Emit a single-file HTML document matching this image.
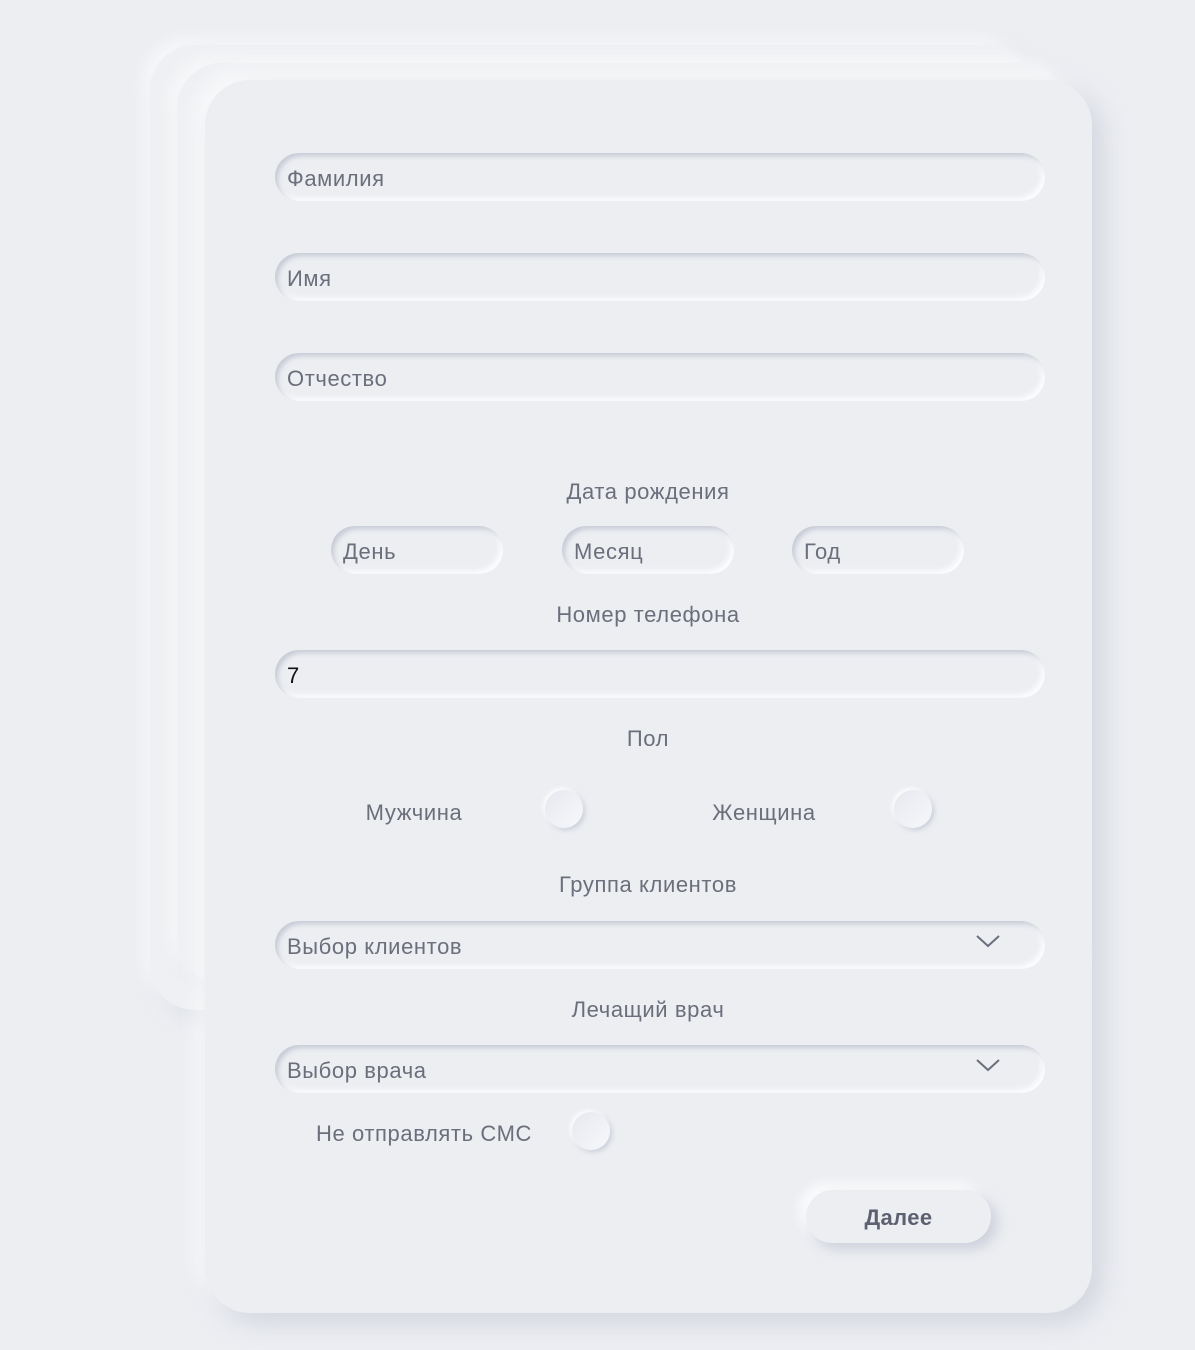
<!DOCTYPE html>
<html><head><meta charset="utf-8"><style>
*{box-sizing:border-box;margin:0;padding:0}
body{width:1195px;height:1350px;background:#eceef2;font-family:"Liberation Sans",sans-serif;position:relative;overflow:hidden;color:#6b6f7b}
.card{position:absolute;border-radius:45px}
.b1{left:150px;top:45px;width:880px;height:965px;background:#eff0f3;box-shadow:8px 8px 20px rgba(190,194,208,.35),-6px -6px 16px rgba(255,255,255,.7)}
.b2{left:177px;top:63px;width:890px;height:920px;background:#eef0f3;box-shadow:8px 8px 20px rgba(190,194,208,.35),-6px -6px 16px rgba(255,255,255,.7)}
.f{left:205px;top:80px;width:887px;height:1233px;background:#eceef2;box-shadow:10px 10px 25px rgba(180,184,200,.45),-8px -8px 20px rgba(255,255,255,.8)}
.in{position:absolute;height:48px;border-radius:24px;background:#eceef2;box-shadow:inset 3px 3px 5px rgba(170,174,192,.55),inset -3px -3px 6px rgba(255,255,255,.95);font-size:22px;letter-spacing:.6px;line-height:52px;padding-left:12px;color:#6b6f7b}
.lbl{position:absolute;font-size:22px;letter-spacing:.6px;transform:translateX(-50%);white-space:nowrap;margin-top:2px}
.rad{position:absolute;width:38px;height:38px;border-radius:50%;background:linear-gradient(135deg,#e6e8ee,#f7f8fb);box-shadow:-2px -2px 4px rgba(255,255,255,.9),2px 2px 5px rgba(170,174,192,.5)}
.chev{position:absolute;right:44px;top:12px}
.btn{position:absolute;left:806px;top:1190px;width:185px;height:53px;border-radius:27px;background:#eceef2;box-shadow:6px 6px 12px rgba(175,180,198,.5),-6px -6px 12px rgba(255,255,255,.9);font-weight:bold;font-size:22px;letter-spacing:.4px;text-align:center;line-height:55px;color:#5c6070}
</style></head><body>
<div class="card b1"></div><div class="card b2"></div><div class="card f"></div>
<div class="in" style="left:275px;top:153px;width:770px">Фамилия</div>
<div class="in" style="left:275px;top:253px;width:770px">Имя</div>
<div class="in" style="left:275px;top:353px;width:770px">Отчество</div>
<div class="lbl" style="left:648px;top:477px">Дата рождения</div>
<div class="in" style="left:331px;top:526px;width:172px">День</div>
<div class="in" style="left:562px;top:526px;width:172px">Месяц</div>
<div class="in" style="left:792px;top:526px;width:172px">Год</div>
<div class="lbl" style="left:648px;top:600px">Номер телефона</div>
<div class="in" style="left:275px;top:650px;width:770px;color:#111">7</div>
<div class="lbl" style="left:648px;top:724px">Пол</div>
<div class="lbl" style="left:414px;top:798px">Мужчина</div>
<div class="rad" style="left:545px;top:790px"></div>
<div class="lbl" style="left:764px;top:798px">Женщина</div>
<div class="rad" style="left:894px;top:790px"></div>
<div class="lbl" style="left:648px;top:870px">Группа клиентов</div>
<div class="in" style="left:275px;top:921px;width:770px">Выбор клиентов<svg class="chev" width="26" height="16" viewBox="0 0 26 16"><path d="M2 3l11 10 11-10" fill="none" stroke="#6b6f7b" stroke-width="2"/></svg></div>
<div class="lbl" style="left:648px;top:995px">Лечащий врач</div>
<div class="in" style="left:275px;top:1045px;width:770px">Выбор врача<svg class="chev" width="26" height="16" viewBox="0 0 26 16"><path d="M2 3l11 10 11-10" fill="none" stroke="#6b6f7b" stroke-width="2"/></svg></div>
<div class="lbl" style="left:424px;top:1119px">Не отправлять СМС</div>
<div class="rad" style="left:572px;top:1112px"></div>
<div class="btn">Далее</div>
</body></html>
